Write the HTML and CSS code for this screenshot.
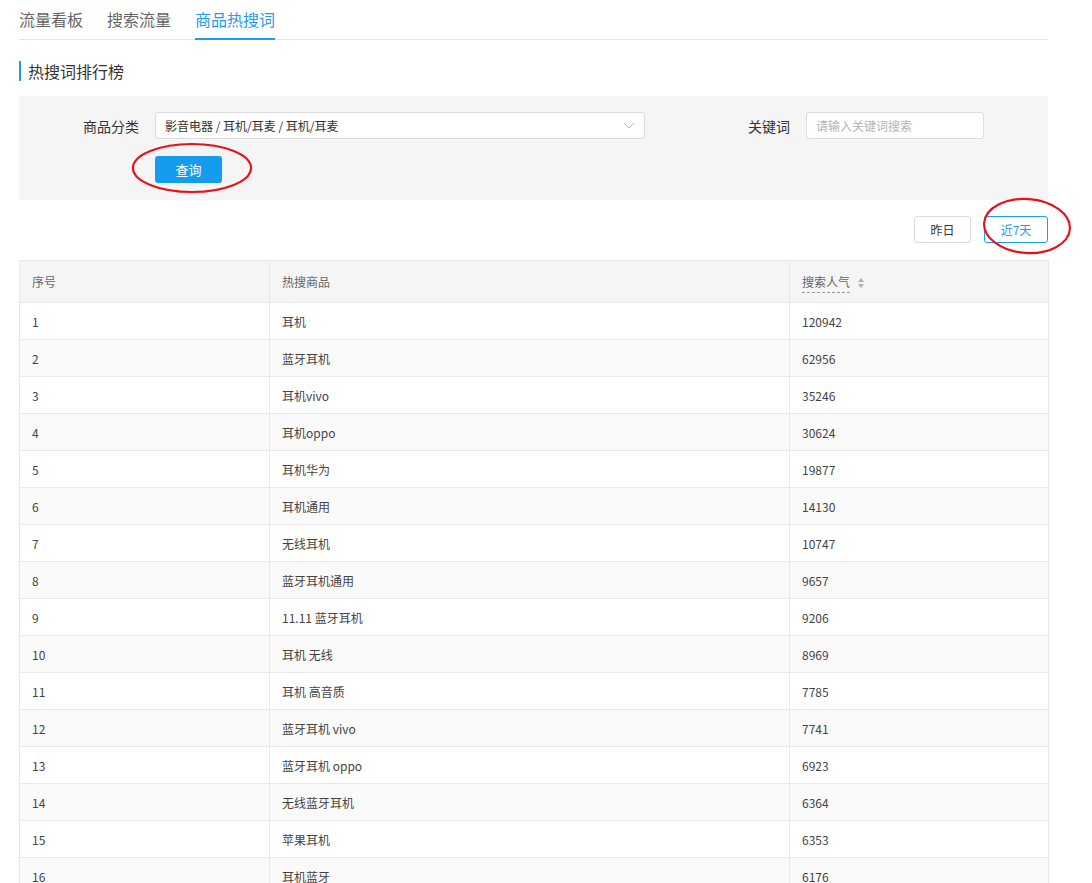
FILE: index.html
```html
<!DOCTYPE html>
<html lang="zh-CN">
<head>
<meta charset="utf-8">
<title>商品热搜词</title>
<link rel="stylesheet" href="styles.css">
</head>
<body>
<div class="page">
  <nav class="tabs">
    <a class="tab">流量看板</a>
    <a class="tab">搜索流量</a>
    <a class="tab active">商品热搜词</a>
  </nav>

  <h2 class="title">热搜词排行榜</h2>

  <div class="filter">
    <div class="filter-row">
      <div class="field">
        <label class="label">商品分类</label>
        <div class="select">
          <span>影音电器 / 耳机/耳麦 / 耳机/耳麦</span>
          <svg class="chev" width="10" height="6" viewBox="0 0 10 6"><path d="M0.5 0.5 L5 5 L9.5 0.5" fill="none" stroke="#b4b4b4" stroke-width="1"/></svg>
        </div>
      </div>
      <div class="field field-kw">
        <label class="label label-kw">关键词</label>
        <div class="input"><span class="ph">请输入关键词搜索</span></div>
      </div>
    </div>
    <div class="btn-row">
      <button class="btn-primary">查询</button>
    </div>
  </div>

  <div class="range">
    <button class="btn">昨日</button>
    <button class="btn btn-on">近7天</button>
  </div>

  <table class="grid">
    <colgroup><col class="c1"><col class="c2"><col class="c3"></colgroup>
    <thead>
      <tr><th>序号</th><th>热搜商品</th><th><span class="sortable">搜索人气</span><svg class="sort" width="6" height="10" viewBox="0 0 6 10"><path d="M3 0 L6 4 L0 4 Z" fill="#b0b0b0"/><path d="M3 10 L6 6 L0 6 Z" fill="#b0b0b0"/></svg></th></tr>
    </thead>
    <tbody>
      <tr><td>1</td><td>耳机</td><td>120942</td></tr>
      <tr><td>2</td><td>蓝牙耳机</td><td>62956</td></tr>
      <tr><td>3</td><td>耳机vivo</td><td>35246</td></tr>
      <tr><td>4</td><td>耳机oppo</td><td>30624</td></tr>
      <tr><td>5</td><td>耳机华为</td><td>19877</td></tr>
      <tr><td>6</td><td>耳机通用</td><td>14130</td></tr>
      <tr><td>7</td><td>无线耳机</td><td>10747</td></tr>
      <tr><td>8</td><td>蓝牙耳机通用</td><td>9657</td></tr>
      <tr><td>9</td><td>11.11 蓝牙耳机</td><td>9206</td></tr>
      <tr><td>10</td><td>耳机 无线</td><td>8969</td></tr>
      <tr><td>11</td><td>耳机 高音质</td><td>7785</td></tr>
      <tr><td>12</td><td>蓝牙耳机 vivo</td><td>7741</td></tr>
      <tr><td>13</td><td>蓝牙耳机 oppo</td><td>6923</td></tr>
      <tr><td>14</td><td>无线蓝牙耳机</td><td>6364</td></tr>
      <tr><td>15</td><td>苹果耳机</td><td>6353</td></tr>
      <tr><td>16</td><td>耳机蓝牙</td><td>6176</td></tr>
    </tbody>
  </table>

  <svg class="mark mark-query" width="124" height="54" viewBox="0 0 124 54"><ellipse cx="62" cy="27" rx="59" ry="24" fill="none" stroke="#e8111b" stroke-width="2.2"/></svg>
  <svg class="mark mark-range" width="92" height="60" viewBox="0 0 92 60"><ellipse cx="46" cy="30" rx="43" ry="27" fill="none" stroke="#e8111b" stroke-width="2.2" transform="rotate(4 46 30)"/></svg>
</div>
</body>
</html>
```

FILE: styles.css
```css
* { box-sizing: border-box; }
html, body { margin: 0; padding: 0; background: #fff; }
body {
  font-family: "Noto Sans CJK SC", "Noto Sans", "Liberation Sans", sans-serif;
  color: #333;
}
.page {
  position: relative;
  width: 1029px;
  margin-left: 19px;
}
.tabs {
  display: flex;
  gap: 24px;
  height: 40px;
  border-bottom: 1px solid #e4e4e4;
}
.tab {
  display: block;
  font-size: 16px;
  line-height: 20px;
  padding-top: 9px;
  color: #666;
  height: 40px;
}
.tab.active {
  color: #1e9bec;
  border-bottom: 2px solid #1e9bec;
}
.title {
  margin: 21px 0 0 0;
  font-size: 16px;
  font-weight: normal;
  line-height: 20px;
  height: 20px;
  color: #333;
  border-left: 2px solid #1e9bec;
  padding-left: 7px;
}
.filter {
  margin-top: 15px;
  background: #f5f5f5;
  padding: 16px 0 17px 0;
}
.filter-row {
  display: flex;
  align-items: center;
}
.field { display: flex; align-items: center; }
.label {
  width: 120px;
  text-align: right;
  font-size: 14px;
  line-height: 20px;
  color: #333;
  margin-right: 16px;
}
.field-kw { margin-left: 65px; }
.label-kw { width: 80px; }
.select {
  width: 490px;
  height: 27px;
  background: #fff;
  border: 1px solid #dcdcdc;
  border-radius: 3px;
  display: flex;
  align-items: center;
  justify-content: space-between;
  padding: 0 10px 0 9px;
  font-size: 12px;
  color: #333;
}
.chev { display: block; }
.input {
  width: 178px;
  height: 27px;
  background: #fff;
  border: 1px solid #dcdcdc;
  border-radius: 3px;
  display: flex;
  align-items: center;
  padding-left: 9px;
}
.ph { font-size: 12px; color: #b4b4b4; }
.btn-row {
  padding-left: 136px;
  margin-top: 17px;
}
.btn-primary {
  width: 67px;
  height: 27px;
  border: 0;
  border-radius: 3px;
  background: #169cee;
  color: #fff;
  font-family: inherit;
  font-size: 13px;
  padding: 0;
  display: block;
}
.range {
  display: flex;
  justify-content: flex-end;
  gap: 13px;
  margin-top: 16px;
}
.btn {
  height: 27px;
  padding: 0;
  width: 57px;
  border: 1px solid #d9d9d9;
  border-radius: 3px;
  background: #fff;
  font-family: inherit;
  font-size: 12px;
  color: #333;
}
.btn-on {
  width: 64px;
  border-color: #1e9bec;
  color: #1e9bec;
}
.grid {
  margin-top: 17px;
  width: 1029px;
  border-collapse: collapse;
  table-layout: fixed;
  font-size: 12px;
}
.c1 { width: 250px; }
.c2 { width: 520px; }
.c3 { width: 259px; }
.grid th, .grid td {
  border: 1px solid #e8e8e8;
  text-align: left;
  padding: 0 12px;
  font-weight: normal;
}
.grid th {
  height: 42px;
  background: #f5f5f5;
  color: #666;
}
.grid td {
  height: 37px;
  color: #444;
}
.grid tbody tr:nth-child(even) td { background: #fafafa; }
.sortable {
  border-bottom: 1px dashed #999;
  padding-bottom: 2px;
}
.sort { margin-left: 8px; vertical-align: -1px; }
.mark { position: absolute; pointer-events: none; }
.mark-query { left: 111px; top: 141px; }
.mark-range { left: 962px; top: 196px; }
```
